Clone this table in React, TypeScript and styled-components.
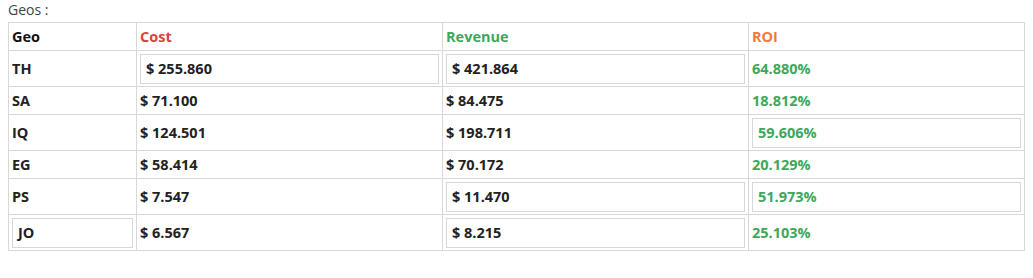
import styled, { createGlobalStyle } from "styled-components";

const GlobalStyle = createGlobalStyle`
    body {
        margin: 0 8px;
        font-family: "Open Sans", "Noto Sans", sans-serif;
        background: #ffffff;
    }
`
const Wrapper = styled.div`
    display: flex;
    flex-direction: column;
`
const Caption = styled.div`
    height: 22px;
    line-height: 20px;
    font-size: 14px;
    color: #444444;
`
const GeoTable = styled.table`
    width: 100%;
    border-collapse: collapse;
    table-layout: fixed;
    border: 1px solid #d8d8d8;
`
const HeadCell = styled.th<{ $color: string; $width?: number }>`
    width: ${(p) => (p.$width ? `${p.$width}px` : "auto")};
    height: 27px;
    padding: 0 3px;
    border: 1px solid #d8d8d8;
    text-align: left;
    font-size: 14.5px;
    font-weight: 700;
    color: ${(p) => p.$color};
`
const Cell = styled.td<{ $boxed?: boolean; $green?: boolean }>`
    height: ${(p) => (p.$boxed ? "35px" : "27px")};
    padding: ${(p) => (p.$boxed ? "0 3px" : "0 3px")};
    border: 1px solid #d8d8d8;
    font-size: 14.5px;
    font-weight: 700;
    color: ${(p) => (p.$green ? "#3ca85c" : "#222222")};
`
const ValueBox = styled.div`
    height: 28px;
    display: flex;
    align-items: center;
    padding: 0 5px;
    border: 1px solid #d8d8d8;
`

type Key = "geo" | "cost" | "revenue" | "roi"

type Row = {
    geo: string;
    cost: string;
    revenue: string;
    roi: string;
    boxed: Key[];
}

const rows: Row[] = [
    { geo: "TH", cost: "$ 255.860", revenue: "$ 421.864", roi: "64.880%", boxed: ["cost", "revenue"] },
    { geo: "SA", cost: "$ 71.100", revenue: "$ 84.475", roi: "18.812%", boxed: [] },
    { geo: "IQ", cost: "$ 124.501", revenue: "$ 198.711", roi: "59.606%", boxed: ["roi"] },
    { geo: "EG", cost: "$ 58.414", revenue: "$ 70.172", roi: "20.129%", boxed: [] },
    { geo: "PS", cost: "$ 7.547", revenue: "$ 11.470", roi: "51.973%", boxed: ["revenue", "roi"] },
    { geo: "JO", cost: "$ 6.567", revenue: "$ 8.215", roi: "25.103%", boxed: ["geo", "revenue"] },
]

const columns: [Key, boolean][] = [
    ["geo", false],
    ["cost", false],
    ["revenue", false],
    ["roi", true],
]

export default function App() {
    return (
        <>
            <GlobalStyle />
            <Wrapper>
                <Caption>Geos :</Caption>
                <GeoTable>
                    <thead>
                        <tr>
                            <HeadCell $color="#111111" $width={121}>Geo</HeadCell>
                            <HeadCell $color="#d9433a" $width={299}>Cost</HeadCell>
                            <HeadCell $color="#3ca85c" $width={299}>Revenue</HeadCell>
                            <HeadCell $color="#f27a3a">ROI</HeadCell>
                        </tr>
                    </thead>
                    <tbody>
                        {rows.map((r) => {
                            const rowBoxed = r.boxed.length > 0;
                            return (
                                <tr key={r.geo}>
                                    {columns.map(([k, green]) => (
                                        <Cell key={k} $boxed={rowBoxed} $green={green}>
                                            {r.boxed.includes(k) ? <ValueBox>{r[k]}</ValueBox> : r[k]}
                                        </Cell>
                                    ))}
                                </tr>
                            );
                        })}
                    </tbody>
                </GeoTable>
            </Wrapper>
        </>
    )
}
